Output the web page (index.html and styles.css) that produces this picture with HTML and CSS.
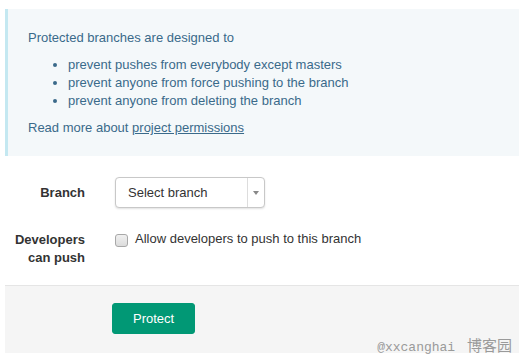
FILE: index.html
```html
<!DOCTYPE html>
<html lang="en">
<head>
    <meta charset="UTF-8">
    <meta name="viewport" content="width=device-width, initial-scale=1.0">
    <title>Protected branches</title>
    <link rel="stylesheet" href="styles.css">
</head>
<body>

    <div class="page">

        <div class="callout">
            <p>Protected branches are designed to</p>
            <ul>
                <li>prevent pushes from everybody except masters</li>
                <li>prevent anyone from force pushing to the branch</li>
                <li>prevent anyone from deleting the branch</li>
            </ul>
            <p>Read more about <a href="#">project permissions</a></p>
        </div>

        <form class="protect-form">
            <div class="form-group">
                <label class="control-label">Branch</label>
                <div class="controls">
                    <div class="select-box">
                        <span class="select-text">Select branch</span>
                        <span class="select-arrow"></span>
                    </div>
                </div>
            </div>

            <div class="form-group">
                <label class="control-label">Developers<br>can push</label>
                <div class="controls">
                    <label class="checkbox">
                        <input type="checkbox">
                        Allow developers to push to this branch
                    </label>
                </div>
            </div>

            <div class="form-actions">
                <button type="button" class="btn-create">Protect</button>
            </div>
        </form>

        <div class="watermark">@xxcanghai <span class="watermark-cn">博客园</span></div>
    </div>

</body>
</html>
```

FILE: styles.css
```css
body, html {
    margin: 0;
    padding: 0;
    background-color: white;
    font-family: "Liberation Sans", Arial, sans-serif;
    font-size: 13px;
    line-height: 18px;
    color: #333;
}

.page {
    position: relative;
    height: 359px;
    padding: 9px 0 0 5px;
    box-sizing: border-box;
    overflow: hidden;
}

.callout {
    background-color: #f4f8fa;
    border-left: 3px solid #c4e8f1;
    color: #3a6a8a;
    padding: 20px 20px 19px 20px;
    margin-bottom: 21px;
}

.callout p {
    margin: 0 0 9px;
}

.callout p:last-child {
    margin-bottom: 0;
}

.callout ul {
    margin: 0 0 9px;
    padding-left: 40px;
}

.callout a {
    color: #3a6a8a;
    text-decoration: underline;
}

.form-group {
    display: flex;
    margin-bottom: 15px;
}

.control-label {
    width: 80px;
    padding: 8px 15px 0 0;
    text-align: right;
    font-weight: bold;
    color: #333;
}

.form-group:first-child .control-label {
    padding-top: 7px;
}

.controls {
    padding-left: 15px;
}

.select-box {
    display: flex;
    width: 148px;
    height: 29px;
    border: 1px solid #c8c8c8;
    border-radius: 4px;
    box-shadow: 0 1px 2px rgba(0, 0, 0, 0.12);
    background-color: white;
}

.select-text {
    flex: 1;
    padding-left: 12px;
    line-height: 29px;
    color: #333;
}

.select-arrow {
    width: 16px;
    border-left: 1px solid #ddd;
    position: relative;
}

.select-arrow::after {
    content: "";
    position: absolute;
    left: 5px;
    top: 13px;
    border-left: 3px solid transparent;
    border-right: 3px solid transparent;
    border-top: 4px solid #888;
}

.checkbox {
    display: flex;
    align-items: center;
    gap: 7px;
    padding-top: 7px;
    color: #333;
}

.checkbox input {
    appearance: none;
    width: 13px;
    height: 13px;
    margin: 3px 0 0 0;
    border: 1px solid #a8a8a8;
    border-radius: 3px;
    background: linear-gradient(#f0f0f0, #dcdcdc);
}

.form-actions {
    margin-top: 18px;
    background-color: #f5f5f5;
    border-top: 1px solid #e5e5e5;
    padding: 17px 0 19px 107px;
}

.btn-create {
    background-color: #019875;
    border: 1px solid #019875;
    color: white;
    font-family: "Liberation Sans", Arial, sans-serif;
    font-size: 13px;
    line-height: 17px;
    padding: 6px 20px;
    border-radius: 3px;
    cursor: pointer;
}

.watermark {
    position: absolute;
    right: 7px;
    bottom: 2px;
    font-family: "Liberation Mono", "Noto Sans CJK SC", monospace;
    font-size: 13px;
    color: #9a9a9a;
}

.watermark-cn {
    font-family: "Noto Sans CJK SC", sans-serif;
    font-size: 15px;
    margin-left: 4px;
}
```
